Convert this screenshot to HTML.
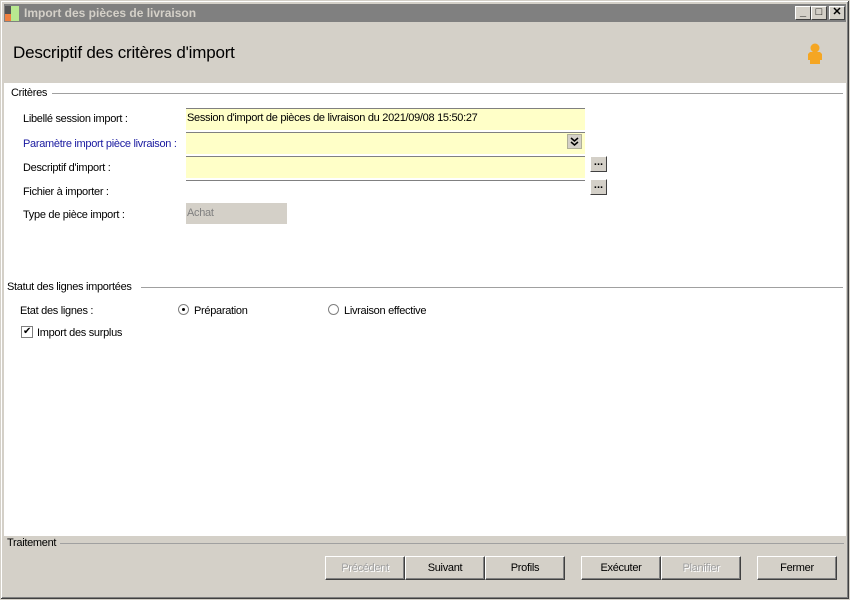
<!DOCTYPE html>
<html><head><meta charset="utf-8"><style>
*{box-sizing:border-box;margin:0;padding:0}
body{width:850px;height:600px;background:#d4d0c8;font-family:"Liberation Sans",sans-serif;font-size:11px;letter-spacing:-0.3px;color:#000;position:relative;overflow:hidden}
.a{position:absolute}
.win{left:0;top:0;width:850px;height:600px;border:1px solid #d4d0c8;box-shadow:inset -1px -1px 0 #404040,inset 1px 1px 0 #fff,inset -2px -2px 0 #808080}
.tb{left:4px;top:4px;width:842px;height:18px;background:#808080;color:#d4d0c8;font-weight:bold;font-size:12px;line-height:18px;padding-left:20px;letter-spacing:0}
.cb{top:6px;width:16px;height:14px;background:#d4d0c8;border:1px solid;border-color:#fff #404040 #404040 #fff;font-size:11px;line-height:11px;text-align:center;font-weight:bold;letter-spacing:0}
.main{left:4px;top:83px;width:842px;height:453px;background:#fff}
.in{left:186px;width:399px;height:22px;background:#ffffc8;border-top:1px solid #808080;padding:3px 1px;font-size:11px}
.lbl{left:23px;font-size:11px}
.dots{left:590px;width:17px;height:16px;background:#d4d0c8;border:1px solid;border-color:#fff #404040 #404040 #fff;font-size:11px;line-height:10px;text-align:center;font-weight:bold;letter-spacing:0}
.btn{top:556px;width:80px;height:24px;background:#d4d0c8;border:1px solid;border-color:#fff #404040 #404040 #fff;box-shadow:inset -1px -1px 0 #808080;text-align:center;line-height:22px;font-size:11px}
.dis{color:#a0a0a0;text-shadow:1px 1px 0 #fff}
.line{height:1px;background:#a0a0a0}
</style></head><body>
<div class="a win"></div>
<div class="a tb">Import des pièces de livraison</div>
<div class="a" style="left:5px;top:6px;width:6px;height:8px;background:#555"></div>
<div class="a" style="left:5px;top:14px;width:6px;height:7px;background:#f08040"></div>
<div class="a" style="left:11px;top:6px;width:8px;height:15px;background:#b8e890"></div>
<div class="a cb" style="left:795px">_</div>
<div class="a cb" style="left:811px">□</div>
<div class="a cb" style="left:829px">✕</div>
<div class="a" style="left:13px;top:43px;font-size:17px;letter-spacing:-0.2px">Descriptif des critères d'import</div>
<svg class="a" style="left:806px;top:43px" width="18" height="22" viewBox="0 0 18 22"><circle cx="9" cy="5" r="4.5" fill="#f5a623"/><path d="M4 9h10l2 2v6h-2v4H4v-4H2v-6z" fill="#f5a623"/></svg>
<div class="a main"></div>
<div class="a" style="left:11px;top:87px">Critères</div>
<div class="a line" style="left:52px;top:93px;width:791px"></div>
<div class="a lbl" style="top:113px">Libellé session import :</div>
<div class="a in" style="top:108px">Session d'import de pièces de livraison du 2021/09/08 15:50:27</div>
<div class="a lbl" style="top:138px;color:#1a1aa0">Paramètre import pièce livraison :</div>
<div class="a in" style="top:132px"></div>
<svg class="a" style="left:567px;top:134px" width="15" height="15" viewBox="0 0 15 15"><rect x="0.5" y="0.5" width="14" height="14" fill="#d4d0c8" stroke="#b0b098"/><path d="M4 4l3.5 3 3.5-3M4 8l3.5 3 3.5-3" fill="none" stroke="#000" stroke-width="1.5"/></svg>
<div class="a lbl" style="top:162px">Descriptif d'import :</div>
<div class="a in" style="top:156px"></div>
<div class="a dots" style="top:156px">...</div>
<div class="a lbl" style="top:186px">Fichier à importer :</div>
<div class="a in" style="top:180px;background:#fff"></div>
<div class="a dots" style="top:179px">...</div>
<div class="a lbl" style="top:209px">Type de pièce import :</div>
<div class="a" style="left:186px;top:203px;width:101px;height:21px;background:#d4d0c8;color:#808080;padding:4px 1px">Achat</div>
<div class="a" style="left:7px;top:281px">Statut des lignes importées</div>
<div class="a line" style="left:141px;top:287px;width:702px"></div>
<div class="a" style="left:20px;top:305px">Etat des lignes :</div>
<div class="a" style="left:178px;top:304px;width:11px;height:11px;border-radius:50%;border:1px solid #808080"></div>
<div class="a" style="left:182px;top:308px;width:3px;height:3px;background:#000;border-radius:50%"></div>
<div class="a" style="left:194px;top:305px">Préparation</div>
<div class="a" style="left:328px;top:304px;width:11px;height:11px;border-radius:50%;border:1px solid #808080"></div>
<div class="a" style="left:344px;top:305px">Livraison effective</div>
<div class="a" style="left:21px;top:326px;width:12px;height:12px;border:1px solid #808080;font-size:10px;line-height:10px;text-align:center">✔</div>
<div class="a" style="left:37px;top:327px">Import des surplus</div>
<div class="a" style="left:7px;top:537px">Traitement</div>
<div class="a line" style="left:60px;top:543px;width:784px"></div>
<div class="a btn dis" style="left:325px">Précédent</div>
<div class="a btn" style="left:405px">Suivant</div>
<div class="a btn" style="left:485px">Profils</div>
<div class="a btn" style="left:581px">Exécuter</div>
<div class="a btn dis" style="left:661px">Planifier</div>
<div class="a btn" style="left:757px">Fermer</div>
</body></html>
